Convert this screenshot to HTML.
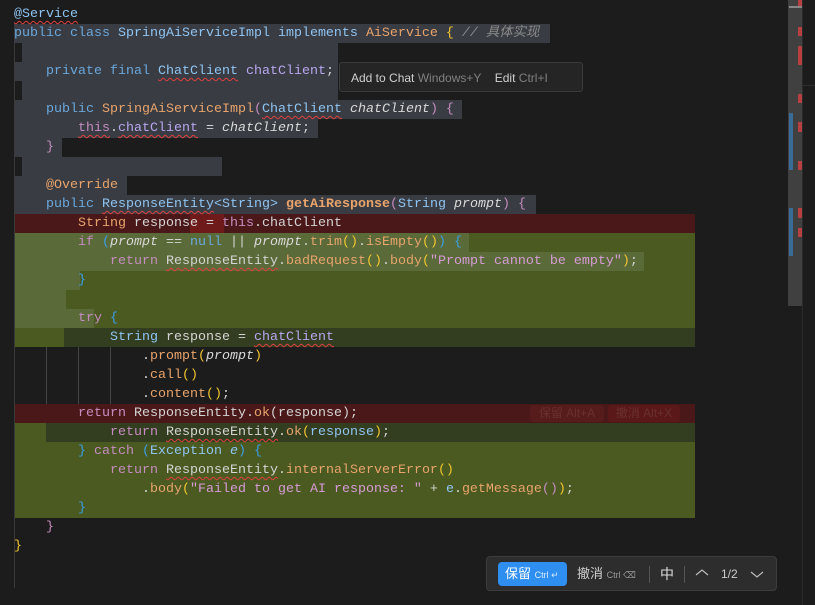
<!DOCTYPE html>
<html><head><meta charset="utf-8"><style>
body{margin:0;width:815px;height:605px;background:#1c1c1c;overflow:hidden;position:relative;font-family:"Liberation Mono","Noto Sans CJK SC",monospace;font-size:13.33px;}
.r{position:absolute;left:0;height:19px;line-height:19px;white-space:pre;}
.t{position:absolute;left:14px;top:0;height:19px;line-height:19px;white-space:pre;color:#d4d4d4}
.bg{position:absolute;height:19px}
.k{color:#6aa7dc}.c{color:#8fc4f2}.o{color:#e8a46c}.f{color:#b9a6f0}.p{color:#c58cc0}.s{color:#d69bd6}.g{color:#8a8a8a;font-style:italic}.i{font-style:italic;color:#d8d8d8}.y{color:#f2c630}.b{color:#3a9ee8}.w{text-decoration:underline wavy #e04040;text-decoration-thickness:1px;text-underline-offset:3px}
.ui{font-family:"Liberation Sans","Noto Sans CJK SC",sans-serif}
</style></head><body>
<!-- gray selection -->
<div class="bg" style="left:14px;top:24px;width:536px;background:#393c42"></div>
<div class="bg" style="left:22px;top:43px;width:316px;background:#393c42"></div>
<div class="bg" style="left:14px;top:62px;width:324px;background:#393c42"></div>
<div class="bg" style="left:22px;top:81px;width:316px;background:#393c42"></div>
<div class="bg" style="left:14px;top:100px;width:448px;background:#393c42"></div>
<div class="bg" style="left:14px;top:119px;width:304px;background:#393c42"></div>
<div class="bg" style="left:14px;top:138px;width:48px;background:#393c42"></div>
<div class="bg" style="left:22px;top:157px;width:200px;background:#393c42"></div>
<div class="bg" style="left:14px;top:176px;width:113px;background:#393c42"></div>
<div class="bg" style="left:14px;top:195px;width:522px;background:#393c42"></div>
<!-- diff -->
<div class="bg" style="left:14px;top:214px;width:681px;background:#4a1819"></div>
<div class="bg" style="left:190px;top:214px;width:34px;background:#6e1a1a"></div>
<div class="bg" style="left:14px;top:233px;width:681px;height:95px;background:#4a5a21"></div>
<div class="bg" style="left:14px;top:233px;width:455px;background:#5a6a38"></div>
<div class="bg" style="left:14px;top:252px;width:630px;background:#5a6a38"></div>
<div class="bg" style="left:14px;top:271px;width:66px;background:#5a6a38"></div>
<div class="bg" style="left:14px;top:290px;width:52px;background:#5a6a38"></div>
<div class="bg" style="left:14px;top:309px;width:80px;background:#5a6a38"></div>
<div class="bg" style="left:14px;top:328px;width:681px;background:#333d1f"></div>
<div class="bg" style="left:14px;top:328px;width:50px;background:#4a5a21"></div>
<div class="bg" style="left:14px;top:404px;width:681px;background:#4a1819"></div>
<div class="bg" style="left:14px;top:423px;width:681px;background:#333d1f"></div>
<div class="bg" style="left:14px;top:423px;width:32px;background:#4a5a21"></div>
<div class="bg" style="left:14px;top:442px;width:681px;height:76px;background:#4a5a21"></div>
<!-- indent guides -->
<div class="bg" style="left:14px;top:43px;width:1px;height:545px;background:#3a3a3a"></div>
<div class="bg" style="left:46px;top:347px;width:1px;height:57px;background:#444"></div>
<div class="bg" style="left:78px;top:347px;width:1px;height:57px;background:#444"></div>
<div class="bg" style="left:110px;top:347px;width:1px;height:57px;background:#444"></div>

<div class="r" style="top:5px"><span class="t"><span class="c w">@Service</span></span></div>
<div class="r" style="top:24px"><span class="t"><span class="k">public class </span><span class="c">SpringAiServiceImpl implements </span><span class="o">AiService </span><span class="y">{</span> <span class="g">// 具体实现</span></span></div>
<div class="r" style="top:62px"><span class="t">    <span class="k">private final </span><span class="c w">ChatClient</span> <span class="f">chatClient</span>;</span></div>
<div class="r" style="top:100px"><span class="t">    <span class="k">public </span><span class="o">SpringAiServiceImpl</span><span class="p">(</span><span class="c w">ChatClient</span> <span class="i">chatClient</span><span class="p">) {</span></span></div>
<div class="r" style="top:119px"><span class="t">        <span class="p w">this</span>.<span class="f w">chatClient</span> = <span class="i">chatClient</span>;</span></div>
<div class="r" style="top:138px"><span class="t">    <span class="p">}</span></span></div>
<div class="r" style="top:176px"><span class="t">    <span class="o">@Override</span></span></div>
<div class="r" style="top:195px"><span class="t">    <span class="k">public </span><span class="c w">ResponseEntity</span><span class="c">&lt;String&gt;</span> <b class="o">getAiResponse</b><span class="p">(</span><span class="c">String</span> <span class="i">prompt</span><span class="p">) {</span></span></div>
<div class="r" style="top:214px"><span class="t">        <span class="o">String</span> response = <span class="p">this</span>.chatClient</span></div>
<div class="r" style="top:233px"><span class="t">        <span class="p">if</span> <span class="b">(</span><span class="i">prompt</span> == <span class="k">null</span> || <span class="i">prompt</span>.<span class="o">trim</span><span class="y">()</span>.<span class="o">isEmpty</span><span class="y">()</span><span class="b">) {</span></span></div>
<div class="r" style="top:252px"><span class="t">            <span class="p">return</span> <span class="w">ResponseEntity</span>.<span class="o">badRequest</span><span class="y">()</span>.<span class="o">body</span><span class="y">(</span><span class="s">"Prompt cannot be empty"</span><span class="y">)</span>;</span></div>
<div class="r" style="top:271px"><span class="t">        <span class="b">}</span></span></div>
<div class="r" style="top:309px"><span class="t">        <span class="p">try</span> <span class="b">{</span></span></div>
<div class="r" style="top:328px"><span class="t">            <span class="c">String</span> response = <span class="f w">chatClient</span></span></div>
<div class="r" style="top:347px"><span class="t">                .<span class="o">prompt</span><span class="y">(</span><span class="i">prompt</span><span class="y">)</span></span></div>
<div class="r" style="top:366px"><span class="t">                .<span class="o">call</span><span class="y">()</span></span></div>
<div class="r" style="top:385px"><span class="t">                .<span class="o">content</span><span class="y">()</span>;</span></div>
<div class="r" style="top:404px"><span class="t">        <span class="p">return</span> ResponseEntity.<span class="o">ok</span>(response);</span></div>
<div class="r" style="top:423px"><span class="t">            <span class="p">return</span> <span class="w">ResponseEntity</span>.<span class="o">ok</span><span class="y">(</span><span class="c">response</span><span class="y">)</span>;</span></div>
<div class="r" style="top:442px"><span class="t">        <span class="b">}</span> <span class="p">catch</span> <span class="b">(</span><span class="c">Exception</span> <span class="i" style="color:#8fc4f2">e</span><span class="b">) {</span></span></div>
<div class="r" style="top:461px"><span class="t">            <span class="p">return</span> <span class="w">ResponseEntity</span>.<span class="o">internalServerError</span><span class="y">()</span></span></div>
<div class="r" style="top:480px"><span class="t">                .<span class="o">body</span><span class="y">(</span><span class="s">"Failed to get AI response: "</span> + <span class="c">e</span>.<span class="o">getMessage</span><span class="p">()</span><span class="y">)</span>;</span></div>
<div class="r" style="top:499px"><span class="t">        <span class="b">}</span></span></div>
<div class="r" style="top:518px"><span class="t">    <span class="p">}</span></span></div>
<div class="r" style="top:537px"><span class="t"><span class="y">}</span></span></div>

<!-- inline hints -->
<div class="ui" style="position:absolute;left:530px;top:405px;width:74px;height:17px;background:#561c1c;border-radius:3px;color:#6a3030;font-size:12px;line-height:17px;text-align:center">保留 Alt+A</div>
<div class="ui" style="position:absolute;left:608px;top:405px;width:72px;height:17px;background:#5a1818;border-radius:3px;color:#6a3030;font-size:12px;line-height:17px;text-align:center">撤消 Alt+X</div>

<!-- tooltip -->
<div class="ui" style="position:absolute;left:339px;top:62px;width:244px;height:30px;background:#252526;border:1px solid #3a3a3a;border-radius:3px;font-size:12px;line-height:30px;color:#d0d0d0;box-sizing:border-box;padding-left:11px;white-space:nowrap">Add to Chat <span style="color:#808080">Windows+Y</span>&nbsp;&nbsp;&nbsp;&nbsp;Edit <span style="color:#808080">Ctrl+I</span></div>

<!-- scrollbar/minimap -->
<div style="position:absolute;left:788px;top:0;width:14px;height:306px;background:#404040"></div>
<div style="position:absolute;left:789px;top:6px;width:13px;height:2px;background:#888"></div>
<div style="position:absolute;left:789px;top:113px;width:4px;height:57px;background:#3a6a96"></div>
<div style="position:absolute;left:789px;top:208px;width:4px;height:48px;background:#3a6a96"></div>
<div style="position:absolute;left:798px;top:0;width:4px;height:6px;background:#b84040"></div>
<div style="position:absolute;left:798px;top:27px;width:4px;height:9px;background:#b84040"></div>
<div style="position:absolute;left:798px;top:46px;width:4px;height:19px;background:#b84040"></div>
<div style="position:absolute;left:798px;top:94px;width:4px;height:9px;background:#b84040"></div>
<div style="position:absolute;left:798px;top:122px;width:4px;height:10px;background:#b84040"></div>
<div style="position:absolute;left:798px;top:161px;width:4px;height:9px;background:#b84040"></div>
<div style="position:absolute;left:798px;top:208px;width:4px;height:10px;background:#b84040"></div>
<div style="position:absolute;left:798px;top:228px;width:4px;height:9px;background:#b84040"></div>
<div style="position:absolute;left:802px;top:0;width:1px;height:605px;background:#2a2a2a"></div>
<div style="position:absolute;left:803px;top:85px;width:12px;height:1px;background:#2e2e2e"></div>

<!-- bottom toolbar -->
<div class="ui" style="position:absolute;left:486px;top:556px;width:291px;height:35px;background:#2d2d2d;border:1px solid #3c3c3c;border-radius:4px;box-sizing:border-box"></div>
<div class="ui" style="position:absolute;left:498px;top:562px;width:69px;height:24px;background:#2f8ff0;border-radius:4px;color:#fff;font-size:13px;line-height:24px;padding-left:7px;box-sizing:border-box;white-space:nowrap">保留 <span style="font-size:9px;color:#d8ebff">Ctrl ↵</span></div>
<div class="ui" style="position:absolute;left:577px;top:562px;height:24px;color:#d0d0d0;font-size:13px;line-height:24px;white-space:nowrap">撤消 <span style="font-size:9px;color:#999">Ctrl ⌫</span></div>
<div style="position:absolute;left:649px;top:566px;width:1px;height:17px;background:#555"></div>
<div class="ui" style="position:absolute;left:660px;top:562px;color:#ddd;font-size:14px;line-height:24px">中</div>
<div style="position:absolute;left:684px;top:566px;width:1px;height:17px;background:#555"></div>
<svg style="position:absolute;left:695px;top:568px" width="14" height="10"><path d="M1 7 L7 2 L13 7" stroke="#bbb" fill="none" stroke-width="1.2"/></svg>
<div class="ui" style="position:absolute;left:721px;top:562px;color:#ccc;font-size:12px;line-height:24px">1/2</div>
<svg style="position:absolute;left:750px;top:570px" width="14" height="10"><path d="M1 2 L7 7 L13 2" stroke="#bbb" fill="none" stroke-width="1.2"/></svg>
</body></html>
